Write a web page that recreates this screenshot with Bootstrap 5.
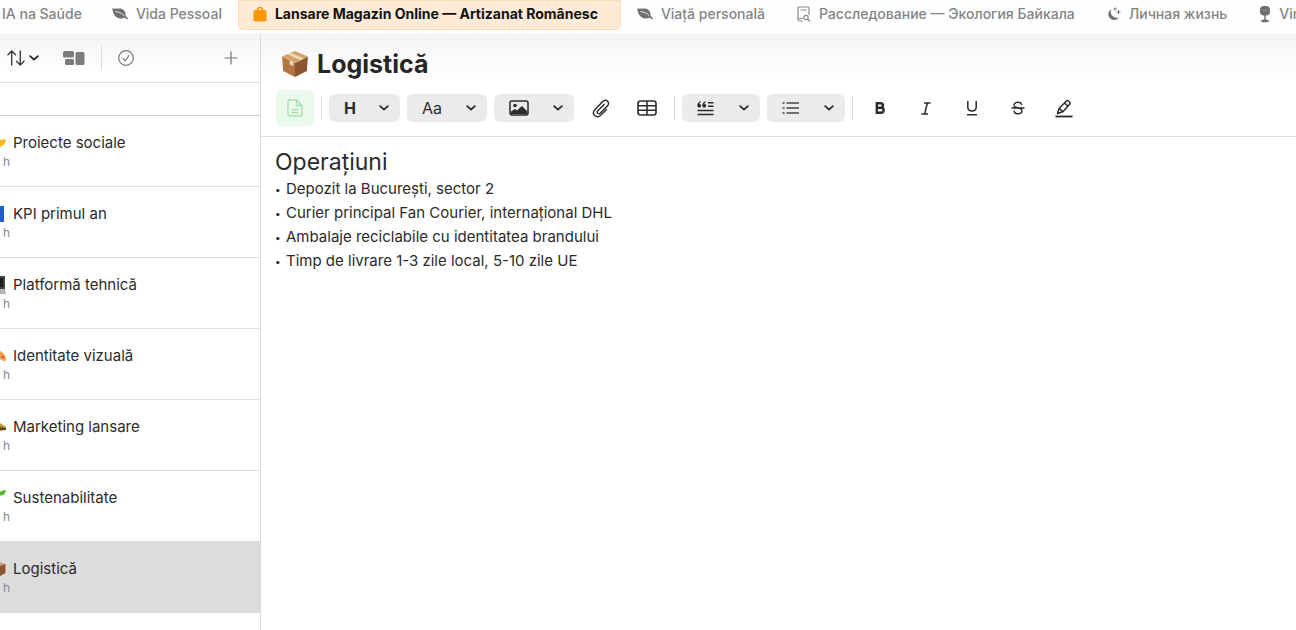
<!DOCTYPE html>
<html lang="ro">
<head>
<meta charset="utf-8">
<meta name="viewport" content="width=device-width, initial-scale=1">
<title>Logistică</title>
<link href="https://cdn.jsdelivr.net/npm/bootstrap@5.3.0/dist/css/bootstrap.min.css" rel="stylesheet">
<style>
body{font-family:Inter,"Liberation Sans",sans-serif;font-size:15px;line-height:20px;color:#2b2b2b;background:#fff}
button{font-family:inherit;color:inherit}
svg{display:block;flex:none}
.tabbar{height:34px;padding-bottom:4px;overflow:hidden;background:#fefefe}
.tab-link{padding:0 16px 2px;height:30px;gap:8px;font-size:14px;font-weight:500;line-height:28px;color:#848484;text-decoration:none;white-space:nowrap;flex:none;display:flex;align-items:center}
.tab-first{padding:0 14px 2px 2px}
.tab-link.active{padding:0 23px 2px 15px;font-weight:700;color:#111;background:#ffebd5;box-shadow:inset 0 0 0 1px #fbdcb8;border-radius:0 0 6px 6px}
.shade{background:linear-gradient(#f4f4f4,#fff 80%)}
.sidebar{width:261px;border-right:1px solid #dcdcdc;flex:none}
.side-tools{height:49px;border-bottom:1px solid #dedede;padding:0 22px 0 7px;color:#777}
.flat{border:0;background:none;padding:0;display:flex;align-items:center}
.find{height:33px;border:0;border-bottom:1px solid #cfcfcf;border-radius:0;outline:0;background:#fff;padding:0 8px;width:100%;display:block}
.note{display:block;height:71px;padding-top:17px;border-bottom:1px solid #dfdfdf;color:#2b2b2b;text-decoration:none}
.note.current{background:#dcdcdc;border-color:#dcdcdc}
.note-name{gap:7px}
.note-age{font-size:12px;line-height:18px;color:#888;padding-left:3px}
.title-row{height:56px;padding:4px 0 0 20px;gap:8px}
.title-row h1{font-size:25px;line-height:32px;font-weight:700;margin:0;color:#262626}
.format{height:47px;padding:0 15px;border-bottom:1px solid #dcdcdc}
.page-btn{width:38px;height:36px;border-radius:6px;background:#ecfaed;justify-content:center;color:#a6dfad}
.rule{width:1px;height:24px;background:#dcdcdc;flex:none}
.set{display:flex;align-items:center;gap:7px}
.tools{display:flex;margin:0 4px}
.pill{height:28px;border-radius:6px;background:#ebebeb;border:0;padding:0 11px 0 15px;display:flex;align-items:center;justify-content:space-between;flex:none;font-size:16px}
.w-a{width:71px}.w-b{width:80px}.w-c{width:78px}
.tool{width:46px;height:28px;justify-content:center;flex:none}
.doc{padding:10px 14px}
.doc h2{font-size:23px;line-height:30px;font-weight:400;margin:0}
.doc ul{list-style:none;padding:0;margin:0;line-height:24px}
.doc li{display:flex;gap:5px}
.doc li::before{content:"•";font-size:10px;width:6px}
</style>
<script src="https://cdn.jsdelivr.net/npm/bootstrap@5.3.0/dist/js/bootstrap.bundle.min.js"></script>
</head>
<body class="d-flex flex-column min-vh-100 overflow-hidden">
<svg width="0" height="0" class="position-absolute" aria-hidden="true">
<symbol id="chev" viewBox="0 0 10 6"><path d="M1.200 1.200L5 4.600l3.800-3.400" fill="none" stroke="currentColor" stroke-width="1.800" stroke-linecap="round" stroke-linejoin="round"/></symbol>
<symbol id="leaf" viewBox="0 0 16 14"><path d="M.3 1.200c2 1 5 0 8 .3 4 .5 5.600 4 5.200 7L15.700 11c.6.700 0 1.600-.8 1.200l-2.200-1.400C7.500 13 1 10.500.3 1.200z" fill="#707070"/><path d="M3.500 4.500c3 .5 6.500 1.500 9 4.500" stroke="#fff" stroke-width=".8" fill="none"/></symbol>
<symbol id="box" viewBox="0 0 26 26"><path d="M1 6l12 6v13L2 19.500z" fill="#b27440"/><path d="M25 6l-12 6v13l11-5.500z" fill="#8b5530"/><path d="M1 6l12-5 12 5-12 6z" fill="#d5a26b"/><path d="M6 4l12 5.500 3-1.500L9 2.600z" fill="#eed9b6"/><path d="M8 9.500l3.500 1.700v4L8 13.500z" fill="#e8d7bd"/></symbol>
</svg>

<nav class="tabbar d-flex" aria-label="Proiecte">
<a class="tab-link tab-first" href="#">IA na Saúde</a>
<a class="tab-link" href="#"><svg width="16" height="14"><use href="#leaf"/></svg>Vida Pessoal</a>
<a class="tab-link active" aria-current="page" href="#"><svg width="14" height="15" viewBox="0 0 14 15"><path d="M4.500 4V3a2.500 2.500 0 0 1 5 0v1" fill="none" stroke="#ff9500" stroke-width="1.500"/><rect x=".5" y="3" width="13" height="11.500" rx="2" fill="#ff9500"/></svg>Lansare Magazin Online — Artizanat Românesc</a>
<a class="tab-link" href="#"><svg width="16" height="14"><use href="#leaf"/></svg>Viață personală</a>
<a class="tab-link" href="#"><svg width="14" height="16" viewBox="0 0 14 16" fill="none" stroke="#888" stroke-width="1.200"><path d="M6 15H2.500C1.500 15 1 14.500 1 13.500V2C1 1.300 1.300 1 2 1h9c.7 0 1 .3 1 1v7M3.500 4h6M1 12.500h5"/><circle cx="9" cy="11.500" r="2.200"/><path d="M10.600 13.200l2.400 2.300"/></svg>Расследование — Экология Байкала</a>
<a class="tab-link" href="#"><svg width="14" height="15" viewBox="0 0 14 15"><path d="M4.500 2A5.800 5.800 0 1 0 12 10.300 5.900 5.900 0 0 1 4.500 2z" fill="#6e6e6e"/><path d="M11.500 3v4M9.500 5h4M8 .5v3M6.500 2h3" stroke="#777"/></svg>Личная жизнь</a>
<a class="tab-link" href="#"><svg width="12" height="17" viewBox="0 0 12 17" fill="#6e6e6e"><rect x="1" y="0" width="10" height="9.500" rx="4"/><path d="M5.300 9h1.400v5H5.300zM2 15.500c0-2.600 8-2.600 8 0 0 1-8 1-8 0z"/><path d="M2 4.200h8" stroke="#999" stroke-width=".8"/></svg>Vin</a>
</nav>

<div class="d-flex flex-grow-1">
<aside class="sidebar">
<div class="side-tools shade d-flex align-items-center">
<button class="flat gap-1 text-dark" aria-label="Sortare"><svg width="18" height="18" viewBox="0 0 19 18" fill="none" stroke="#333" stroke-width="1.400" stroke-linecap="round" stroke-linejoin="round"><path d="M5 16.500v-15M1 5.500l4-4 4 4M14 1.500v15M10 12.500l4 4 4-4"/></svg><svg width="10" height="6"><use href="#chev"/></svg></button>
<button class="flat ms-4" aria-label="Aspect"><svg width="22" height="15" viewBox="0 0 22 15" fill="#7c7c7c"><rect x="0" y="0" width="11" height="6.500" rx="1.500"/><rect x="2" y="8" width="9" height="6" rx="1.500"/><rect x="12.500" y="1" width="9" height="13" rx="1.500"/></svg></button>
<span class="rule ms-3"></span>
<button class="flat ms-3" aria-label="Finalizate"><svg width="16" height="16" viewBox="0 0 16 16" fill="none" stroke="#777" stroke-width="1.200" stroke-linecap="round"><circle cx="8" cy="8" r="7.300"/><path d="M5 8.300l2.200 2.500 3.800-5.300"/></svg></button>
<button class="flat ms-auto" aria-label="Adaugă"><svg width="14" height="14" viewBox="0 0 14 14" stroke="#777" stroke-width="1.200"><path d="M7 .5v13M.5 7h13"/></svg></button>
</div>
<input class="find" type="search" aria-label="Caută">
<nav aria-label="Note">
<a class="note" href="#"><span class="note-name d-flex align-items-center"><svg width="6" height="16" viewBox="0 0 6 16"><path d="M0 5l5-1c1 0 1 1.500.5 2.500L3.500 10 0 12z" fill="#f6b91b"/></svg>Proiecte sociale</span><span class="note-age d-block">h</span></a>
<a class="note" href="#"><span class="note-name d-flex align-items-center"><svg width="6" height="16" viewBox="0 0 6 16"><path d="M0 0h4v16H0z" fill="#1d5dcb"/></svg>KPI primul an</span><span class="note-age d-block">h</span></a>
<a class="note" href="#"><span class="note-name d-flex align-items-center"><svg width="6" height="18" viewBox="0 0 6 18"><path d="M0 0h5v13H0z" fill="#444"/><path d="M0 2h3v9H0z" fill="#1c1c1c"/><path d="M0 13h5l1 5H0z" fill="#b5b5b5"/></svg>Platformă tehnică</span><span class="note-age d-block">h</span></a>
<a class="note" href="#"><span class="note-name d-flex align-items-center"><svg width="6" height="16" viewBox="0 0 6 16"><path d="M0 3c3 1 6 5 6 9-1 2-3 1-6-1z" fill="#eda04e"/><circle cx="3" cy="9" r="1.300" fill="#e3503f"/></svg>Identitate vizuală</span><span class="note-age d-block">h</span></a>
<a class="note" href="#"><span class="note-name d-flex align-items-center"><svg width="6" height="16" viewBox="0 0 6 16"><path d="M0 4l6 4v3L0 12z" fill="#c79a24"/><path d="M0 8l6 1v2H0z" fill="#5b4713"/></svg>Marketing lansare</span><span class="note-age d-block">h</span></a>
<a class="note" href="#"><span class="note-name d-flex align-items-center"><svg width="6" height="16" viewBox="0 0 6 16"><path d="M0 2c2-2 4-2 6-1.500C5.500 4 3 6 0 5.500z" fill="#5cb82f"/></svg>Sustenabilitate</span><span class="note-age d-block">h</span></a>
<a class="note current" aria-current="page" href="#"><span class="note-name d-flex align-items-center"><svg width="6" height="16" viewBox="0 0 6 16"><path d="M0 1l5.500 2L0 6z" fill="#cf9c66"/><path d="M0 5l5.500-2v9L0 15z" fill="#8b5530"/></svg>Logistică</span><span class="note-age d-block">h</span></a>
</nav>
</aside>

<main class="flex-grow-1">
<div class="title-row shade d-flex align-items-center"><svg width="28" height="28" role="img" aria-label="Pachet"><use href="#box"/></svg><h1>Logistică</h1></div>
<div class="format d-flex align-items-start" role="toolbar" aria-label="Formatare">
<div class="d-flex align-items-center">
<div class="set">
<button class="flat page-btn" aria-label="Pagină"><svg width="16" height="18" viewBox="0 0 16 18" fill="none" stroke="currentColor" stroke-width="1.400" stroke-linejoin="round"><path d="M3 1h6.500L15 6.500V15a2 2 0 0 1-2 2H3a2 2 0 0 1-2-2V3a2 2 0 0 1 2-2zM9.500 1v5.500H15M4.500 10.500h7M4.500 13.500h7"/></svg></button>
<span class="rule"></span>
<button class="pill w-a fw-bold">H<svg width="10" height="6"><use href="#chev"/></svg></button>
<button class="pill w-b">Aa<svg width="10" height="6"><use href="#chev"/></svg></button>
<button class="pill w-b" aria-label="Imagine"><svg width="20" height="16" viewBox="0 0 20 16"><rect x="1" y="1" width="18" height="14" rx="2" fill="none" stroke="#2b2b2b" stroke-width="1.500"/><circle cx="6" cy="5.500" r="1.800" fill="#2b2b2b"/><path d="M2 14v-2.500L6 9l2 1.500L13 6l5 5v3z" fill="#2b2b2b"/></svg><svg width="10" height="6"><use href="#chev"/></svg></button>
</div>
<div class="tools">
<button class="flat tool" aria-label="Atașament"><svg width="18" height="19" viewBox="0 0 18 19" fill="none" stroke="#2b2b2b" stroke-width="1.400" stroke-linecap="round" stroke-linejoin="round"><path d="M14.500 10.500L9 16c-2 2-4.500 2.300-6.300.6-1.700-1.700-1.600-4.200.4-6.200l7.600-7.800c1.500-1.500 3.500-1.700 4.900-.4s1.200 3.300-.2 4.800l-7 7.100c-.9.900-2 .9-2.700.2s-.7-1.700.2-2.600L12 5.500"/></svg></button>
<button class="flat tool" aria-label="Tabel"><svg width="20" height="16" viewBox="0 0 20 16" fill="none" stroke="#2b2b2b" stroke-width="1.600"><rect x="1" y="1" width="18" height="14" rx="2.500"/><path d="M1 5.700h18M1 10.300h18M10 1v14"/></svg></button>
</div>
<div class="set">
<span class="rule"></span>
<button class="pill w-c" aria-label="Citat"><svg width="17" height="15" viewBox="0 0 17 15" stroke="#2b2b2b" stroke-width="1.500"><path d="M11 1.800h5.500M11 5.300h5.500M.5 9.500h16M.5 13.500h16"/><g fill="#2b2b2b" stroke="none"><path d="M4 .2C1.500.8.300 2.300.3 4.200c0 1.500.8 2.400 2 2.400 1 0 1.900-.8 1.900-1.800S3.500 3 2.400 3c0-.9.700-1.600 1.700-2zM9 .2C6.500.8 5.300 2.300 5.300 4.200c0 1.500.8 2.400 2 2.400 1 0 1.900-.8 1.900-1.800S8.500 3 7.400 3c0-.9.700-1.600 1.700-2z"/></g></svg><svg width="10" height="6"><use href="#chev"/></svg></button>
<button class="pill w-c" aria-label="Listă"><svg width="17" height="14" viewBox="0 0 17 14" stroke="#444" stroke-width="1.300"><path d="M4.500 2H17M4.500 7H17M4.500 12H17M.5 2h2M.5 7h2M.5 12h2"/></svg><svg width="10" height="6"><use href="#chev"/></svg></button>
<span class="rule"></span>
</div>
<div class="tools">
<button class="flat tool" aria-label="Aldin"><svg width="12" height="12" viewBox="0 0 12 12" fill="none" stroke="#2b2b2b" stroke-width="2.400"><path d="M2.800 1.200h3.700c3.300 0 3.300 4.600 0 4.600H2.800h4c3.800 0 3.800 5 0 5h-4zM2.800 0v12"/></svg></button>
<button class="flat tool" aria-label="Cursiv"><svg width="10" height="13" viewBox="0 0 10 13" fill="none" stroke="#2b2b2b" stroke-width="1.500"><path d="M3 1h6.500M.5 12H7M6.300 1L3.700 12"/></svg></button>
<button class="flat tool" aria-label="Subliniat"><svg width="12" height="16" viewBox="0 0 12 16" fill="none" stroke="#2b2b2b" stroke-width="1.500"><path d="M1.800 1v6c0 5.300 8.400 5.300 8.400 0V1M1 14.800h10"/></svg></button>
<button class="flat tool" aria-label="Tăiat"><svg width="14" height="14" viewBox="0 0 14 14" fill="none" stroke="#2b2b2b" stroke-width="1.400"><path d="M10.800 4C10.500 2 9 1.200 7 1.200 3 1.200 2.200 4.500 4 5.900c1.500 1.100 6 .9 6.800 3.200.8 2.200-1 3.700-3.700 3.700-2.600 0-4-1.200-4.100-3.200M.5 7h13"/></svg></button>
<button class="flat tool" aria-label="Evidențiere"><svg width="18" height="19" viewBox="0 0 18 19" fill="none" stroke="#2b2b2b" stroke-width="1.500" stroke-linejoin="round"><path d="M2.500 14.500l1.700-5.200L11.700 1.800c1-1 4.300 1.800 3.200 3.300L7.800 12.700zM4.200 9.300l3.600 3.400M9.500 4l3.500 3.200"/><path d="M.5 17.500h17" stroke-width="1.800"/></svg></button>
</div>
</div>
</div>
<article class="doc">
<h2>Operațiuni</h2>
<ul>
<li>Depozit la București, sector 2</li>
<li>Curier principal Fan Courier, internațional DHL</li>
<li>Ambalaje reciclabile cu identitatea brandului</li>
<li>Timp de livrare 1-3 zile local, 5-10 zile UE</li>
</ul>
</article>
</main>
</div>
</body>
</html>
